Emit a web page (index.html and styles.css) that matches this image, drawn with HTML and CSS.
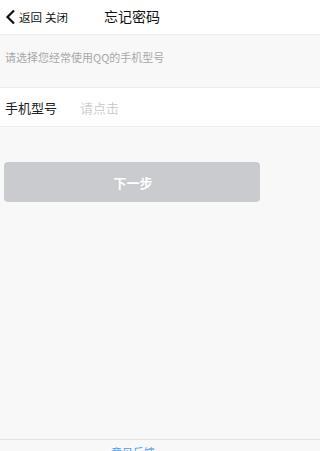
FILE: index.html
```html
<!DOCTYPE html>
<html lang="zh">
<head>
<meta charset="utf-8">
<link rel="stylesheet" href="styles.css">
</head>
<body>
<div class="page">
  <header class="nav">
    <div class="nav-left">
      <svg class="chev" width="12" height="16" viewBox="0 0 12 16"><path d="M9 1.5 L2.5 8 L9 14.5" fill="none" stroke="#111" stroke-width="2.2" stroke-linejoin="miter"/></svg>
      <span class="nav-link">返回</span>
      <span class="nav-link">关闭</span>
    </div>
    <div class="nav-title">忘记密码</div>
  </header>
  <div class="hint">请选择您经常使用QQ的手机型号</div>
  <div class="row">
    <span class="row-label">手机型号</span>
    <span class="row-value">请点击</span>
  </div>
  <div class="actions">
    <button class="btn">下一步</button>
  </div>
  <div class="spacer"></div>
  <footer class="foot">
    <span class="foot-link">意见反馈</span>
    <span class="foot-icon">
      <svg width="14" height="10" viewBox="0 0 14 10"><circle cx="5" cy="5" r="3" fill="none" stroke="#bbb" stroke-width="1.4"/><circle cx="9" cy="5" r="3" fill="none" stroke="#bbb" stroke-width="1.4"/></svg>
    </span>
  </footer>
</div>
</body>
</html>
```
FILE: styles.css
```css
html, body {
  margin: 0;
  padding: 0;
  background: #f8f8f8;
}
body {
  font-family: "Noto Sans CJK SC", "Noto Sans", sans-serif;
  height: 451px;
  overflow: hidden;
}
.page {
  display: flex;
  flex-direction: column;
  height: 451px;
}
.nav {
  height: 34px;
  background: #fff;
  border-bottom: 1px solid #ececec;
  display: flex;
  align-items: center;
  position: relative;
}
.nav-left {
  display: flex;
  align-items: center;
  padding-left: 5px;
  gap: 3px;
}
.chev {
  display: block;
  margin-right: -1px;
}
.nav-link {
  font-size: 11.5px;
  color: #111;
  line-height: 16px;
}
.nav-title {
  position: absolute;
  left: 104px;
  top: 0;
  line-height: 32px;
  font-size: 14px;
  color: #111;
}
.hint {
  height: 53px;
  box-sizing: border-box;
  padding: 15px 0 0 5px;
  font-size: 11px;
  line-height: 14px;
  color: #a8a8a8;
  border-bottom: 1px solid #ececec;
}
.row {
  height: 38px;
  background: #fff;
  border-bottom: 1px solid #ececec;
  display: flex;
  align-items: center;
  padding-left: 5px;
}
.row-label {
  font-size: 13px;
  color: #222;
  width: 75px;
}
.row-value {
  font-size: 13px;
  color: #cfcfcf;
}
.actions {
  padding: 35px 0 0 4px;
}
.btn {
  display: block;
  width: 256px;
  height: 40px;
  border: none;
  border-radius: 4px;
  background: #c9cbce;
  color: #fff;
  font-family: "Noto Sans CJK SC", sans-serif;
  font-size: 13px;
  font-weight: bold;
  padding: 0 0 0 2px;
}
.spacer {
  flex: 1;
}
.foot {
  height: 11px;
  border-top: 1px solid #e2e2e2;
  background: #f8f8f8;
  position: relative;
  overflow: hidden;
}
.foot-link {
  position: absolute;
  left: 111px;
  top: 5px;
  font-size: 11px;
  line-height: 14px;
  color: #4a9df2;
}
.foot-icon {
  position: absolute;
  left: 222px;
  top: 2px;
}
```
